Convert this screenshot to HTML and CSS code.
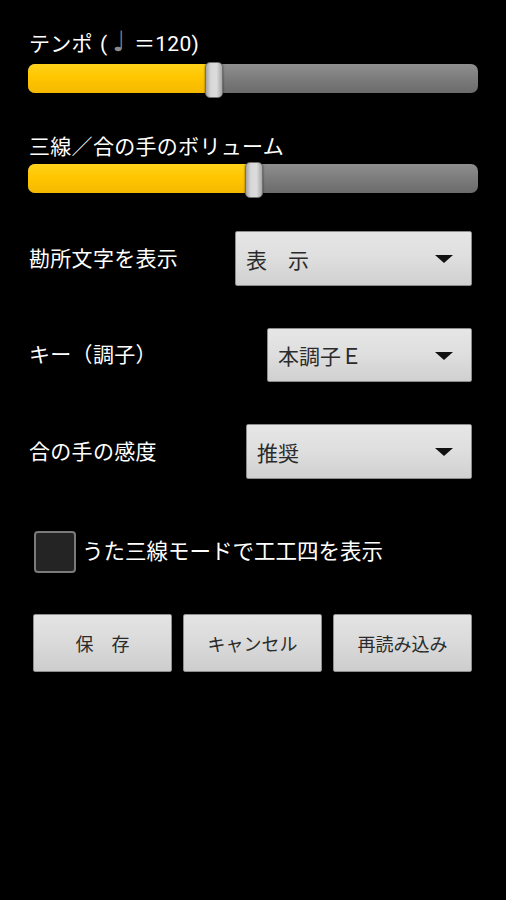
FILE: index.html
```html
<!DOCTYPE html>
<html lang="ja">
<head>
<meta charset="utf-8">
<title>設定</title>
<link rel="stylesheet" href="styles.css">
</head>
<body>
<main class="screen">
  <section class="slider-block first">
    <div class="label">テンポ<span class="paren">(</span><span class="note">♩</span>＝120)</div>
    <div class="slider">
      <div class="track">
        <div class="fill" style="width: 180px"></div>
      </div>
      <div class="thumb" style="left: 177px"></div>
    </div>
  </section>

  <section class="slider-block second">
    <div class="label">三線／合の手のボリューム</div>
    <div class="slider">
      <div class="track">
        <div class="fill" style="width: 220px"></div>
      </div>
      <div class="thumb" style="left: 217px"></div>
    </div>
  </section>

  <section class="options">
    <div class="row row-1">
      <span class="row-label">勘所文字を表示</span>
      <div class="spinner w-237"><span class="value">表　示</span><span class="arrow"></span></div>
    </div>
    <div class="row row-2">
      <span class="row-label">キー（調子）</span>
      <div class="spinner w-205"><span class="value">本調子Ｅ</span><span class="arrow"></span></div>
    </div>
    <div class="row row-3">
      <span class="row-label">合の手の感度</span>
      <div class="spinner w-226"><span class="value">推奨</span><span class="arrow"></span></div>
    </div>

    <label class="check-row">
      <span class="checkbox"></span>
      <span class="check-label">うた三線モードで工工四を表示</span>
    </label>

    <div class="buttons">
      <button class="btn">保　存</button>
      <button class="btn">キャンセル</button>
      <button class="btn">再読み込み</button>
    </div>
  </section>
</main>
</body>
</html>
```

FILE: styles.css
```css
* { box-sizing: border-box; }

html, body {
  margin: 0;
  padding: 0;
  background: #000;
  width: 506px;
  height: 900px;
  overflow: hidden;
}

body {
  font-family: "Roboto", "Noto Sans CJK JP", sans-serif;
  color: #fff;
}

.screen {
  padding: 0 28px;
}

.slider-block.first { padding-top: 30px; }
.slider-block.second { margin-top: 35px; }

.label {
  font-size: 21px;
  line-height: 28px;
  height: 28px;
  letter-spacing: 0.3px;
  padding-left: 1px;
  white-space: nowrap;
}

.paren {
  margin-left: 7px;
}

.note {
  color: #8a8a8a;
  font-family: "DejaVu Sans", sans-serif;
  font-variant-emoji: text;
  font-size: 28px;
  line-height: 20px;
  margin: 0 8px 0 5px;
}

.slider {
  position: relative;
  height: 36px;
  margin-top: 4px;
  width: 450px;
}

.second .slider { margin-top: 1px; }

.track {
  position: absolute;
  left: 0;
  right: 0;
  top: 2px;
  height: 29px;
  border-radius: 7px;
  overflow: hidden;
  background: linear-gradient(to bottom, #8e8f8e 0%, #7b7c7b 50%, #6a6b6a 100%);
}

.fill {
  height: 100%;
  background: linear-gradient(to bottom, #ffd21a 0%, #ffc600 45%, #f5b800 100%);
}

.thumb {
  position: absolute;
  top: 0;
  width: 18px;
  height: 36px;
  border-radius: 5px;
  background: linear-gradient(to right, #a4a4a4 0%, #d8d8d8 30%, #dcdcdc 65%, #a8a8a8 100%);
  border: 1px solid #707070;
  box-shadow: 0 0 2px rgba(0,0,0,0.6);
}

.options {
  margin-top: 33px;
  padding-right: 6px;
}

.row {
  display: flex;
  align-items: center;
  justify-content: space-between;
  height: 55px;
}

.row-2, .row-3 { margin-top: 42px; }
.row-2 { height: 54px; }

.row-label {
  font-size: 21px;
  line-height: 28px;
  letter-spacing: 0.3px;
  padding-left: 1px;
}

.spinner {
  height: 100%;
  display: flex;
  align-items: center;
  justify-content: space-between;
  padding: 0 18px 0 10px;
  border: 1px solid #8c8c8c;
  border-radius: 2px;
  background: linear-gradient(to bottom, #e6e6e6 0%, #dedede 50%, #d0d0d0 100%);
  color: #2b2b2b;
  font-size: 21px;
}

.w-237 { width: 237px; }
.w-205 { width: 205px; }
.w-226 { width: 226px; }

.arrow {
  width: 0;
  height: 0;
  border-left: 9px solid transparent;
  border-right: 9px solid transparent;
  border-top: 8px solid #111;
  margin-top: 1px;
}

.check-row {
  display: flex;
  align-items: center;
  margin-top: 52px;
  padding-left: 6px;
  height: 42px;
}

.checkbox {
  width: 42px;
  height: 42px;
  border: 2px solid #7a7a7a;
  border-radius: 4px;
  background: #242424;
  flex: none;
}

.check-label {
  font-size: 21.5px;
  margin-left: 6px;
  line-height: 28px;
  white-space: nowrap;
}

.buttons {
  display: grid;
  grid-template-columns: repeat(3, 139px);
  gap: 11px;
  margin-top: 41px;
  padding-left: 5px;
}

.btn {
  height: 58px;
  border: 1px solid #8e8e8e;
  border-radius: 2px;
  background: linear-gradient(to bottom, #e4e4e4 0%, #dadada 50%, #cdcdcd 100%);
  color: #2b2b2b;
  font-family: "Roboto", "Noto Sans CJK JP", sans-serif;
  font-size: 18px;
  padding: 0;
}
```
